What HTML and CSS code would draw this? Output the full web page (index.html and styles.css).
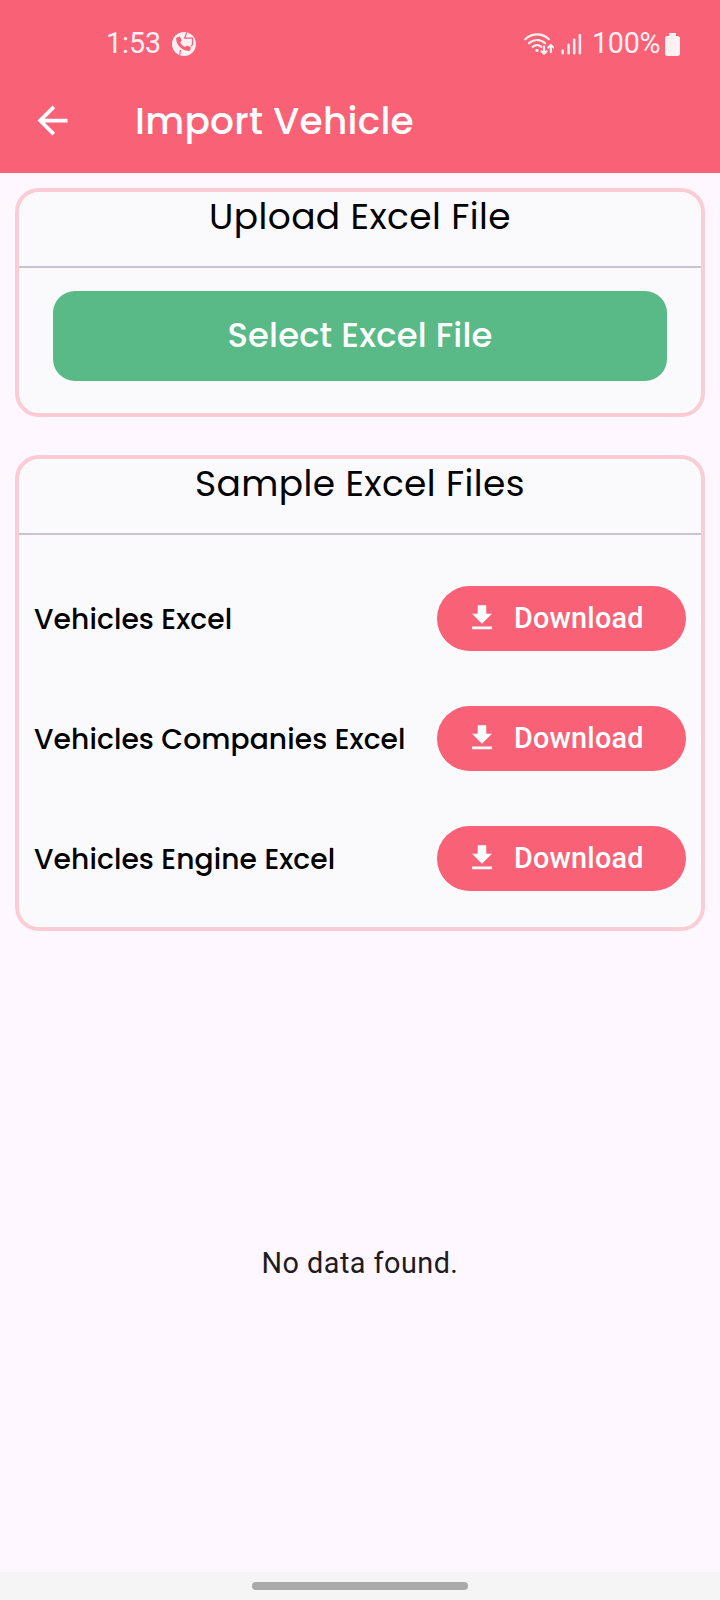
FILE: index.html
```html
<!DOCTYPE html>
<html lang="en">
<head>
<meta charset="utf-8">
<title>Import Vehicle</title>
<link rel="stylesheet" href="styles.css">
</head>
<body>
<div class="screen">
  <header class="header">
    <div class="status">
      <span class="clock">1:53</span>
      <svg class="call" width="24" height="24" viewBox="0 0 24 24">
        <circle cx="12" cy="12" r="12" fill="#fff1f3"/>
        <path d="M4.600 5.600 7.800 4.500l2 3.900-1.500 2c1.100 2.200 2.500 3.600 4.700 4.500l1.900-1.500 4 1.800-.6 2.800c-.3.800-1 1.200-1.900 1.100C9.800 18.400 4.300 13.200 4.100 6.600z" fill="#f96176"/>
        <path d="M14.800.5l-2.300 5.700h8v6.500l-1.600 1.500M7.700 23.300l.8-5.500" fill="none" stroke="#f96176" stroke-width="1.200"/>
      </svg>
      <svg class="wifi" width="30" height="22" viewBox="0 0 30 22">
        <g fill="none" stroke="#fff1f3" stroke-linecap="round" stroke-width="2.1">
          <path d="M1.200 6.200c7-6.400 16.700-6.400 23.700 0M5 10.300c4.700-4.400 11.400-4.400 16.100 0M8.700 13.900c2.600-2.300 6-2.300 8.600 0"/>
          <path d="M20 13.300v7.400M17.500 18.300l2.500 2.500 2.500-2.500M26.900 19.200v-7M24.300 14.600l2.600-2.500 2.600 2.500"/>
        </g>
        <circle cx="13" cy="17.400" r="1.600" fill="#fff1f3"/>
      </svg>
      <svg class="signal" width="21" height="22" viewBox="0 0 21 22">
        <path d="M1.700 20.200v-2.700M7.600 20.200v-8.500M13.200 20.200V6.800M18.900 20.200V2" stroke="#fff1f3" stroke-width="2.500" stroke-linecap="round"/>
      </svg>
      <span class="percent">100%</span>
      <svg class="battery" width="15" height="23" viewBox="0 0 15 23">
        <path d="M4.800 0h5.400q.8 0 .8.800V3h1.500Q15 3 15 5.500v14.800Q15 23 12.500 23h-10Q0 23 0 20.300V5.500Q0 3 2.500 3H4V.8Q4 0 4.800 0z" fill="#fff1f3"/>
      </svg>
    </div>
    <div class="appbar">
      <svg class="back" width="45" height="45" viewBox="0 0 24 24"><path d="M20 11H7.830l5.590-5.590L12 4l-8 8 8 8 1.410-1.410L7.830 13H20v-2z" fill="#fff"/></svg>
      <h1 class="title">Import Vehicle</h1>
    </div>
  </header>

  <main class="content">
    <section class="card upload">
      <h2 class="card-title">Upload Excel File</h2>
      <button class="select">Select Excel File</button>
    </section>

    <section class="card samples">
      <h2 class="card-title">Sample Excel Files</h2>
      <div class="rows">
        <div class="row">
          <span class="label">Vehicles Excel</span>
          <button class="download"><svg width="34" height="34" viewBox="0 0 24 24"><path d="M19 9h-4V3H9v6H5l7 7 7-7zM5 18v2h14v-2H5z" fill="#fff"/></svg><span>Download</span></button>
        </div>
        <div class="row">
          <span class="label">Vehicles Companies Excel</span>
          <button class="download"><svg width="34" height="34" viewBox="0 0 24 24"><path d="M19 9h-4V3H9v6H5l7 7 7-7zM5 18v2h14v-2H5z" fill="#fff"/></svg><span>Download</span></button>
        </div>
        <div class="row">
          <span class="label">Vehicles Engine Excel</span>
          <button class="download"><svg width="34" height="34" viewBox="0 0 24 24"><path d="M19 9h-4V3H9v6H5l7 7 7-7zM5 18v2h14v-2H5z" fill="#fff"/></svg><span>Download</span></button>
        </div>
      </div>
    </section>

    <p class="empty">No data found.</p>
  </main>

  <footer class="navbar"><div class="handle"></div></footer>
</div>
</body>
</html>
```
FILE: styles.css
```css
* { box-sizing: border-box; margin: 0; padding: 0; }

body { background: #fef7ff; }

button { border: 0; }

svg { display: block; flex: none; }

.screen {
  width: 720px;
  height: 1600px;
  display: flex;
  flex-direction: column;
  background: #fef7ff;
  font-family: Poppins, Inter, sans-serif;
  white-space: nowrap;
  overflow: hidden;
}

.header {
  height: 173px;
  flex: none;
  background: #f96176;
}

.status {
  height: 68px;
  padding: 20px 40px 0 106px;
  display: flex;
  align-items: center;
  color: #fff1f3;
  font: 400 28.600px/46px Roboto, sans-serif;
}

.clock, .percent { padding-bottom: 2px; }
.clock { width: 66px; }
.wifi { margin-left: auto; }
.signal { margin-left: 7px; }
.percent { width: 73px; margin-left: 10px; letter-spacing: -0.2px; }

.appbar {
  height: 105px;
  padding-left: 30px;
  display: flex;
  align-items: center;
}

.title {
  margin-left: 60px;
  color: #fff;
  font-size: 37.500px;
  font-weight: 500;
  line-height: 54px;
  letter-spacing: 0.270px;
}

.content {
  flex: 1;
  padding: 15px 15px 0;
  display: flex;
  flex-direction: column;
}

.card {
  border: 4px solid #fbccd3;
  border-radius: 24px;
  background: #fafafc;
}

.upload { height: 229px; }
.samples { height: 476px; margin-top: 38px; }

.card-title {
  height: 76px;
  border-bottom: 2px solid #cac4d0;
  font-size: 36px;
  font-weight: 400;
  line-height: 50px;
  letter-spacing: 0.380px;
  text-align: center;
  color: #000;
}

.select {
  display: block;
  width: 614.500px;
  height: 90px;
  margin: 23.400px auto 0;
  border-radius: 22px;
  background: #59ba88;
  color: #fff;
  font: 500 33.750px/90px Poppins, Inter, sans-serif;
  letter-spacing: 0.190px;
}

.rows { padding: 23px 15.500px 0 15px; }

.row {
  height: 120px;
  display: flex;
  align-items: center;
  justify-content: space-between;
}

.label {
  padding-top: 1px;
  font-size: 28.125px;
  font-weight: 500;
  line-height: 42px;
  letter-spacing: 0.100px;
  color: #000;
}

.download {
  width: 249px;
  height: 65px;
  padding-left: 28.500px;
  border-radius: 33px;
  display: flex;
  align-items: center;
  gap: 15px;
  background: #f96176;
  color: #fff;
  font: 500 28.800px/40px Roboto, sans-serif;
  letter-spacing: 0.200px;
}

.empty {
  margin-top: 312px;
  text-align: center;
  color: #1d1b20;
  font: 400 28.800px/40px Roboto, sans-serif;
  letter-spacing: 0.470px;
}

.navbar {
  height: 28px;
  flex: none;
  padding-top: 10px;
  background: #f5f5f5;
}

.handle {
  width: 216px;
  height: 8px;
  margin: 0 auto;
  border-radius: 4px;
  background: #aaa;
}
```
